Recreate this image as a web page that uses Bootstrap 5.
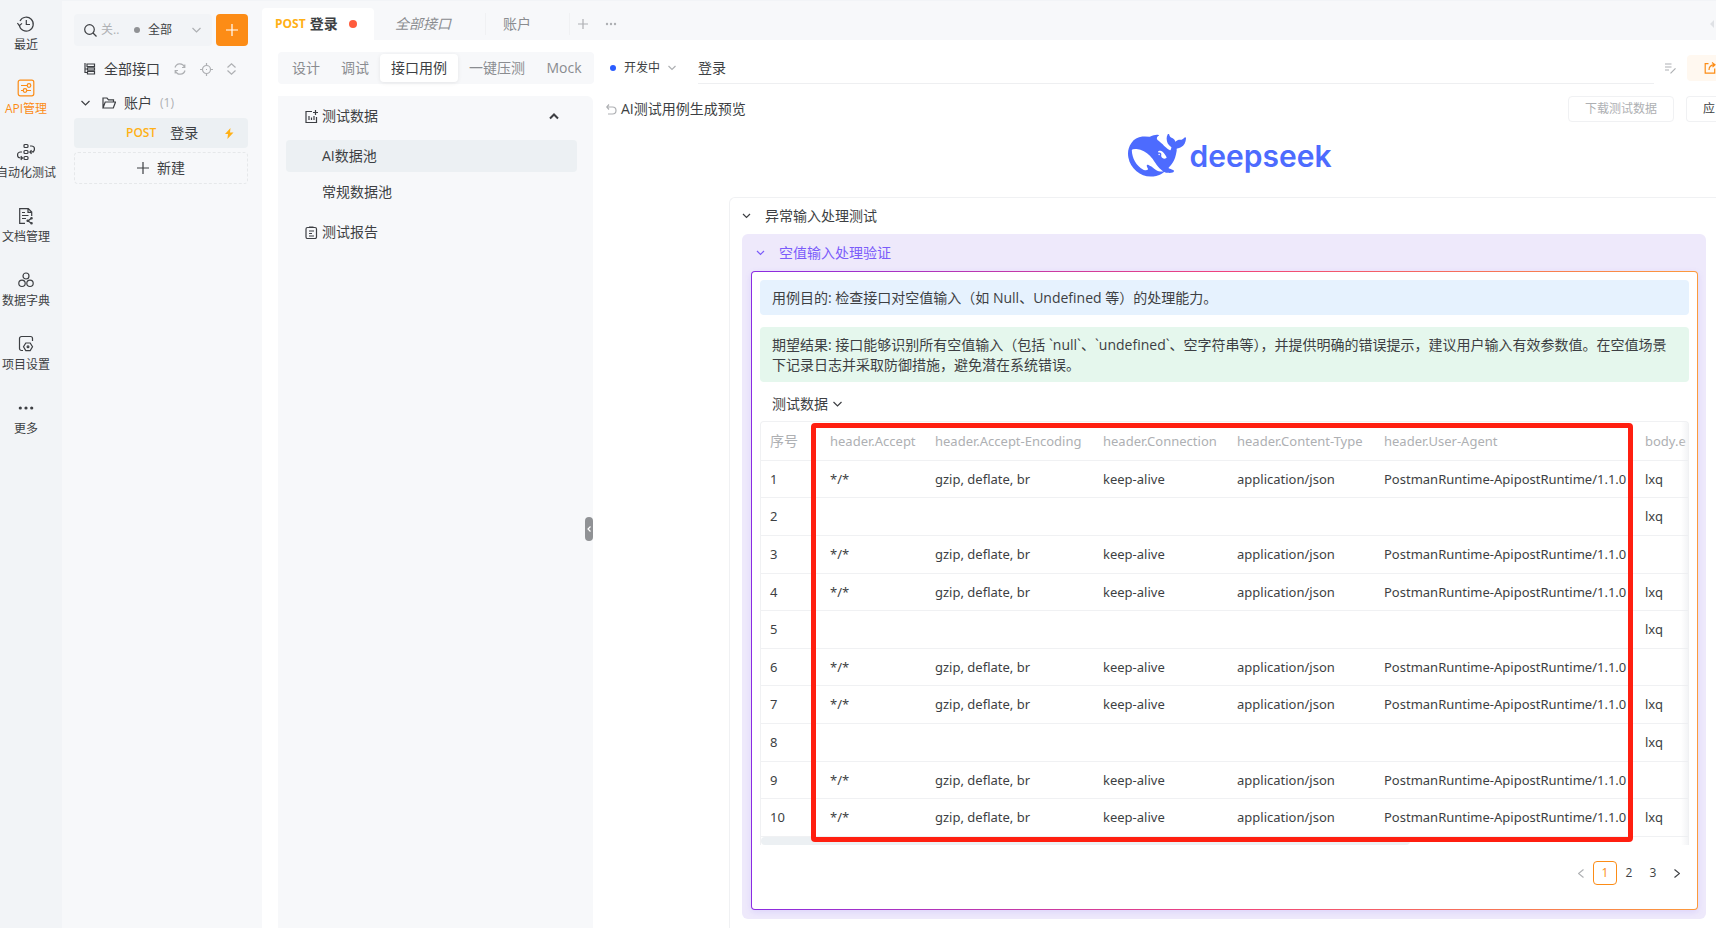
<!DOCTYPE html>
<html lang="zh-CN">
<head>
<meta charset="utf-8">
<meta name="viewport" content="width=device-width, initial-scale=1">
<title>登录 - 接口用例</title>
<link href="https://cdn.jsdelivr.net/npm/bootstrap@5.3.0/dist/css/bootstrap.min.css" rel="stylesheet">
<style>
  :root { --ink: #3d3f43; --muted: #8a8c90; --faint: #aeb0b3; --line: #f0f1f3; --soft: #f7f8fa; --hover: #ecf0f3; --orange: #fc8c16; }
  body { font: 14px/20px "Open Sans", "Noto Sans CJK SC", sans-serif; color: var(--ink); min-height: 100vh; overflow-x: hidden; border-top: 1px solid #f2f4f7; }
  button, input, select { font: inherit; color: inherit; border: 0; background: none; padding: 0; }
  a { color: inherit; text-decoration: none; }
  svg { display: block; flex: none; fill: none; stroke: currentColor; stroke-width: 1.2; }
  .fs12 { font-size: 12px; }
  .gap14 { gap: 14px; }
  .muted { color: var(--muted); }
  .faint { color: var(--faint); }

  .rail { width: 62px; background: #f2f4f7; padding: 14px 10px 0 0; flex: none; }
  .rail a { height: 64px; font-size: 12px; line-height: 16px; white-space: nowrap; gap: 4px; }
  .rail a.on { color: var(--orange); }

  .side { width: 200px; background: var(--soft); padding: 13px 14px 0 12px; flex: none; }
  .search-box { height: 32px; background: #f2f4f7; border-radius: 4px; padding: 0 10px; width: 138px; }
  .search-box input { width: 25px; }
  .search-box input::placeholder { color: var(--faint); opacity: 1; }
  .search-box select { appearance: none; width: 40px; }
  .add { width: 32px; height: 32px; background: var(--orange); color: #fff; border-radius: 4px; }
  .post { color: #ffb016; font-weight: 600; font-size: 12px; }
  .all-row { height: 32px; margin-top: 7px; padding-left: 10px; }
  .folder-row { height: 30px; margin-top: 3px; padding-left: 7px; }
  .tree-on { height: 30px; background: var(--hover); border-radius: 4px; padding: 0 14px 0 52px; }
  .new-btn { height: 32px; border: 1px dashed #e6e8ea; border-radius: 4px; }

  .tabs { height: 39px; background: var(--soft); padding-top: 7px; }
  .tabs .tab { height: 32px; }
  .tab.on { width: 112px; background: #fff; border-radius: 4px 4px 0 0; padding-left: 13px; font-weight: 600; }
  .tab.on .post { font-weight: 700; }
  .tab.mid { width: 112px; padding-left: 21px; font-style: italic; }
  .tab.end { width: 84px; padding-left: 17px; }
  .tab.mid::after, .tab.end::after { content: ""; width: 1px; height: 22px; background: var(--line); margin-left: auto; }
  .dot { border-radius: 50%; flex: none; display: inline-block; }

  .seg { width: 316px; height: 32px; background: var(--soft); border-radius: 4px; padding: 2px 0; }
  .seg button { height: 28px; color: var(--muted); border-radius: 4px; }
  .seg .on { width: 78px; background: #fff; color: var(--ink); box-shadow: 0 1px 4px rgba(0,0,0,.08); }
  .name-wrap { margin-left: 22px; }
  .name { border-bottom: 1px solid #eeeff1; height: 32px; width: 100%; outline: 0; padding-bottom: 2px; }
  .edit { padding: 0 10px; }
  .share { width: 29px; height: 26px; background: #fff8f0; color: var(--orange); border-radius: 4px 0 0 4px; padding-left: 17px; overflow: hidden; }

  .cases { width: 315px; background: var(--soft); border-radius: 0 6px 0 0; flex: none; position: relative; padding: 0 16px 0 8px; }
  .cases button, .cases a { height: 40px; }
  .cases .pool { height: 32px; padding-left: 36px; border-radius: 4px; }
  .cases .pool.on { background: var(--hover); }
  .cases .grip { position: absolute; right: 0; top: 421px; width: 8px; height: 24px; background: #909295; color: #fff; border-radius: 4px; }

  .btn-line { height: 26px; border: 1px solid var(--line); border-radius: 4px; font-size: 12px; }
  .btn-line.wide { width: 106px; margin-right: 12px; }
  .btn-line.cut { width: 30px; border-right: 0; border-radius: 4px 0 0 4px; padding-left: 16px; }

  .brand { color: #4d6bfe; height: 75px; padding: 0 0 8px 2px; margin-left: 148px; }
  .brand svg { fill: currentColor; stroke: none; }
  .brand span { font: 600 30px/40px Inter, sans-serif; }

  .case-box { border: 1px solid var(--line); border-right: 0; border-radius: 6px 0 0 0; margin-left: 136px; padding: 0 10px 9px 12px; }
  .group { background: #eee9fb; border-radius: 6px; padding: 0 8px 9px 9px; }
  .row-head { height: 36px; }
  .group .row-head { height: 37px; color: #7b5cfa; padding-left: 5px; }
  .frame { border: 1px solid transparent; border-radius: 4px; padding: 8px; height: 639px;
    background: linear-gradient(#fff,#fff) padding-box, linear-gradient(90deg,#8a2be2,#f0437c 50%,#fc9a3c) border-box; box-shadow: 0 2px 6px rgba(123,92,250,.15); }
  .note { border-radius: 4px; padding: 8px 12px 7px; }
  .aim { background: #e6f2fe; margin-bottom: 12px; }
  .expect { background: #e5f7ed; margin-bottom: 10px; }
  .data-toggle { height: 24px; margin: 0 0 5px 12px; }
  .data-wrap { position: relative; border: 1px solid var(--line); border-bottom: 0; border-radius: 4px 4px 0 0; overflow: hidden; height: 424px; }
  .data-wrap::after { content: ""; position: absolute; top: 0; right: 0; bottom: 0; width: 7px; background: linear-gradient(90deg, transparent, rgba(235,237,240,.6)); }
  .data-grid { table-layout: fixed; width: 100%; font-family: "Noto Sans", "Noto Sans CJK SC", sans-serif; font-size: 13px; }
  .data-grid th, .data-grid td { padding: 0 0 0 9px; border-bottom: 1px solid var(--line); white-space: nowrap; height: 38px; }
  .data-grid th { font-weight: 400; color: var(--faint); }
  .data-grid th:first-child { font-size: 14px; }
  .data-grid tbody tr:nth-child(5n+1) td, .data-grid tbody tr:nth-child(5n+4) td { height: 37px; }
  .hbar { height: 8px; width: 70%; background: var(--hover); border-radius: 4px; }
  .marker { position: absolute; left: 51px; right: 56px; top: 2px; height: 419px; border: 5px solid #ff1f10; border-radius: 4px; pointer-events: none; z-index: 2; }
  .marker-host { position: relative; }
  .pager button { width: 24px; height: 24px; font-size: 12px; border-radius: 4px; }
  .pager .on { border: 1px solid var(--orange); color: var(--orange); }
</style>
</head>
<body class="d-flex">

<nav class="rail">
  <a href="#" class="d-flex flex-column align-items-center"><svg width="18" height="18" viewBox="0 0 18 18" stroke-width="1.4"><path d="M3 6a7 7 0 1 1-.7 4"/><path d="M.4 8l2 2.6L5 8.400M9.300 5v4.500H13"/></svg>最近</a>
  <a href="#" class="on d-flex flex-column align-items-center"><svg width="18" height="18" viewBox="0 0 18 18" stroke-width="1.5"><rect x="1.200" y="1.200" width="15.600" height="15.600" rx="2"/><path d="M4 6.500h6M4 11.500h2M10 11.500h4"/><circle cx="12" cy="6.500" r="1.800"/><circle cx="8" cy="11.500" r="1.800"/></svg>API管理</a>
  <a href="#" class="d-flex flex-column align-items-center"><svg width="18" height="18" viewBox="0 0 18 18"><rect x="7" y="1.500" width="4" height="3" rx="1"/><rect x="7" y="7.500" width="4" height="3" rx="1"/><rect x="7" y="13.500" width="4" height="3" rx="1"/><path d="M13 3h1.500a3 3 0 0 1 0 6M17 9h-4l1.500-1.800M13 9l1.500 1.800M5 9H3.500a3 3 0 0 0 0 6H5M3.800 13.200L5.500 15l-1.700 1.800"/></svg>自动化测试</a>
  <a href="#" class="d-flex flex-column align-items-center"><svg width="18" height="18" viewBox="0 0 18 18" stroke-width="1.400"><path d="M8 16.300H2.700V1.700h8.600l3.400 3.400V9M11 2v3.400h3.500M5 5.500h3M5 8.500h6.500M5 11.500h4"/><path d="M14 11.500l-3 2.500 3 2"/><circle cx="14.500" cy="11.300" r=".7"/><circle cx="10.700" cy="13.800" r=".7"/><circle cx="14.500" cy="16.200" r=".7"/></svg>文档管理</a>
  <a href="#" class="d-flex flex-column align-items-center"><svg width="18" height="18" viewBox="0 0 18 18" stroke-width="1.500"><circle cx="9" cy="5" r="3"/><circle cx="5" cy="12.300" r="3.200"/><circle cx="13" cy="12.300" r="3.200"/></svg>数据字典</a>
  <a href="#" class="d-flex flex-column align-items-center"><svg width="18" height="18" viewBox="0 0 18 18" stroke-width="1.400"><path d="M6 15.500H4.500a2 2 0 0 1-2-2v-10a2 2 0 0 1 2-2h9a2 2 0 0 1 2 2V6"/><path d="M8.800 8h4.400l2.300 3.800-2.300 3.800H8.800l-2.300-3.800z"/><circle cx="11" cy="11.800" r=".9"/></svg>项目设置</a>
  <a href="#" class="d-flex flex-column align-items-center"><svg width="18" height="18" viewBox="0 0 18 18" style="fill:currentColor;stroke:none"><circle cx="3.300" cy="9" r="1.600"/><circle cx="9" cy="9" r="1.600"/><circle cx="14.700" cy="9" r="1.600"/></svg>更多</a>
</nav>

<aside class="side">
  <div class="d-flex gap-1">
    <div class="search-box d-flex align-items-center">
      <svg width="13" height="13" viewBox="0 0 13 13"><circle cx="5.500" cy="5.500" r="4.800"/><path d="M9 9l3.500 3.500"/></svg>
      <input class="ms-1 fs12" type="text" placeholder="关.." aria-label="关键词">
      <i class="dot ms-2" style="width:6px;height:6px;background:#909295"></i>
      <select class="ms-2 fs12" aria-label="类型"><option>全部</option></select>
      <svg class="faint ms-1" width="9" height="6" viewBox="0 0 9 6"><path d="M.5 1l4 4 4-4"/></svg>
    </div>
    <button class="add d-flex align-items-center justify-content-center" aria-label="添加"><svg width="12" height="12" viewBox="0 0 12 12" stroke-width="1.500"><path d="M6 0v12M0 6h12"/></svg></button>
  </div>
  <div class="all-row d-flex align-items-center gap14">
    <span class="d-flex align-items-center gap-2"><svg width="12" height="12" viewBox="0 0 12 12"><path d="M3 1h7.500v2.500H3zM3.500 4.800h7v2.400h-7zM3.500 8.500h7V11h-7zM1 0v9.500h2.500M1 6h2.500"/></svg>
    <a href="#">全部接口</a></span>
    <svg class="faint" width="12" height="12" viewBox="0 0 12 12"><path d="M1 4.500a5 5 0 0 1 9.500-.5M10.800 1.500V4.500H8M11 7.500a5 5 0 0 1-9.500.5M1.200 10.500V7.500H4"/></svg>
    <svg class="faint" width="13" height="13" viewBox="0 0 13 13"><circle cx="6.500" cy="6.500" r="4"/><path d="M6.500 0v3M6.500 10v3M0 6.500h3M10 6.500h3M6 6.500h1"/></svg>
    <svg class="faint" width="9" height="12" viewBox="0 0 9 12"><path d="M.5 4.500l4-3.700 4 3.700M.5 7.500l4 3.700 4-3.700"/></svg>
  </div>
  <div class="folder-row d-flex align-items-center">
    <svg width="9" height="6" viewBox="0 0 9 6"><path d="M.5 1l4 4 4-4"/></svg>
    <svg class="ms-2 me-2 ps-1" width="18" height="12" viewBox="0 0 14 12"><path d="M1 11V1h4l1.500 1.800h5V5M1 11L3.200 5H13.500l-2.200 6z"/></svg>
    <a href="#">账户</a><span class="faint ms-2 fs12">(1)</span>
  </div>
  <a href="#" class="tree-on d-flex align-items-center"><span class="d-flex gap14"><span class="post">POST</span><span>登录</span></span><svg class="ms-auto" width="9" height="11" viewBox="0 0 9 11" style="fill:#ffb016;stroke:none"><path d="M5.500 0L0 6h3l-.6 5L8.500 4.500H5z"/></svg></a>
  <button class="new-btn w-100 mt-1 d-flex align-items-center justify-content-center gap-2"><svg width="12" height="12" viewBox="0 0 12 12" stroke-width="1.500"><path d="M6 0v12M0 6h12"/></svg>新建</button>
</aside>

<main class="flex-fill d-flex flex-column" style="min-width:0">
  <div class="tabs d-flex">
    <a href="#" class="tab on d-flex align-items-center"><span class="post">POST</span><span class="ms-1">登录</span><i class="dot ms-auto" style="width:8px;height:8px;background:#ff5b3c;margin-right:17px"></i></a>
    <a href="#" class="tab mid muted d-flex align-items-center">全部接口</a>
    <a href="#" class="tab end muted d-flex align-items-center">账户</a>
    <button class="faint ms-2" aria-label="新标签"><svg width="10" height="10" viewBox="0 0 10 10" stroke-width="1.500"><path d="M5 0v10M0 5h10"/></svg></button>
    <button class="faint ms-3 px-0" aria-label="更多标签"><svg width="14" height="4" viewBox="0 0 14 4" style="fill:currentColor;stroke:none"><circle cx="3" cy="2" r="1.200"/><circle cx="7" cy="2" r="1.200"/><circle cx="11" cy="2" r="1.200"/></svg></button>
    <button class="ms-auto" aria-label="向左" style="color:#dfe1e5"><svg width="6" height="8" viewBox="0 0 6 8" style="fill:currentColor;stroke:none"><path d="M4 0v8L0 4z"/></svg></button>
  </div>

  <div class="d-flex align-items-center ps-3" style="height:56px">
    <div class="seg d-flex">
      <button class="ms-1" style="width:48px">设计</button><button style="width:50px">调试</button><button class="on">接口用例</button><button style="width:78px">一键压测</button><button style="width:56px">Mock</button>
    </div>
    <i class="dot ms-3" style="width:6px;height:6px;background:#2a5cff"></i>
    <button class="d-flex align-items-center ms-2 fs12">开发中<svg class="faint ms-2" width="8" height="6" viewBox="0 0 8 6"><path d="M.5 1L4 4.500 7.500 1"/></svg></button>
    <div class="name-wrap flex-fill"><input class="name" type="text" value="登录" aria-label="名称"></div>
    <button class="edit faint" aria-label="编辑说明"><svg width="13" height="11" viewBox="0 0 13 11" stroke-width="1.500"><path d="M1 1h6.500M1 4h6.500M1 7h4M6.500 10.300l5-5"/></svg></button>
    <button class="share d-flex align-items-center" aria-label="分享"><svg width="12" height="12" viewBox="0 0 12 12" stroke-width="1.400"><path d="M4.500 1.700H1.200v9.500h9.500V6.500M5 8c0-4 2-5 5.500-5.300M8 .5l3 2.200-2.500 2.500"/></svg></button>
  </div>

  <div class="d-flex flex-fill ps-3">
    <div class="cases">
      <button class="w-100 d-flex align-items-center mb-1" style="padding-left:19px"><svg width="13" height="13" viewBox="0 0 13 13"><path d="M7 1.500H1v11h10.500V7M4 10V6M6.500 10V7.500M9 10V6M10.500 0v5M8 2.500h5"/></svg><span class="ms-1">测试数据</span><svg class="ms-auto" width="10" height="7" viewBox="0 0 10 7" style="stroke-width:2;margin-right:18px"><path d="M1 5.500l4-4 4 4"/></svg></button>
      <a href="#" class="pool on d-flex align-items-center mb-1">AI数据池</a>
      <a href="#" class="pool d-flex align-items-center mb-1">常规数据池</a>
      <a href="#" class="d-flex align-items-center" style="padding-left:19px"><svg width="13" height="13" viewBox="0 0 13 13"><rect x="1" y="1.500" width="10.500" height="11" rx="1.500"/><path d="M4 1.200h4.500M4 5h5M4 7.500h3M4 10h5"/></svg><span class="ms-1">测试报告</span></a>
      <button class="grip d-flex align-items-center justify-content-center" aria-label="收起"><svg width="4" height="6" viewBox="0 0 4 6"><path d="M3.500.5L1 3l2.500 2.500"/></svg></button>
    </div>

    <section class="flex-fill" style="min-width:0">
      <div class="d-flex align-items-center">
        <button class="faint" style="margin-left:13px" aria-label="返回"><svg width="11" height="11" viewBox="0 0 11 11"><path d="M3 .5L.8 3 3 5.500M1 3h5.500a3.500 3.500 0 0 1 0 7H2"/></svg></button>
        <span class="ms-1 me-auto">AI测试用例生成预览</span>
        <button class="btn-line wide faint">下载测试数据</button>
        <button class="btn-line cut text-start">应</button>
      </div>
      <div class="brand d-flex align-items-center justify-content-center gap-1">
        <svg width="58" height="43" viewBox="0 3.300 24 17.400"><path d="M23.748 4.482c-.254-.124-.364.113-.512.234-.051.039-.094.09-.137.136-.372.397-.806.657-1.373.626-.829-.046-1.537.214-2.163.848-.133-.782-.575-1.248-1.247-1.548-.352-.156-.708-.311-.955-.65-.172-.241-.219-.51-.305-.774-.055-.16-.11-.323-.293-.35-.2-.031-.278.136-.356.276-.313.572-.434 1.202-.422 1.84.027 1.436.633 2.58 1.838 3.393.137.093.172.187.129.323-.082.28-.18.552-.266.833-.055.179-.137.217-.329.14a5.526 5.526 0 01-1.736-1.18c-.857-.828-1.631-1.742-2.597-2.458a11.365 11.365 0 00-.689-.471c-.985-.957.13-1.743.388-1.836.27-.098.093-.432-.779-.428-.872.004-1.67.295-2.687.684a3.055 3.055 0 01-.465.137 9.597 9.597 0 00-2.883-.102c-1.885.21-3.39 1.102-4.497 2.623C.082 8.606-.231 10.684.152 12.85c.403 2.284 1.569 4.175 3.36 5.653 1.858 1.533 3.997 2.284 6.438 2.14 1.482-.085 3.133-.284 4.994-1.86.47.234.962.327 1.78.397.63.059 1.236-.03 1.705-.128.735-.156.684-.837.419-.961-2.155-1.004-1.682-.595-2.113-.926 1.096-1.296 2.746-2.642 3.392-7.003.05-.347.007-.565 0-.845-.004-.17.035-.237.23-.256a4.173 4.173 0 001.545-.475c1.396-.763 1.96-2.015 2.093-3.517.02-.23-.004-.467-.247-.588zM11.581 18c-2.089-1.642-3.102-2.183-3.52-2.16-.392.024-.321.471-.235.763.09.288.207.486.371.739.114.167.192.416-.113.603-.673.416-1.842-.14-1.897-.167-1.361-.802-2.5-1.86-3.301-3.307-.774-1.393-1.224-2.887-1.298-4.482-.02-.386.093-.522.477-.592a4.696 4.696 0 011.529-.039c2.132.312 3.946 1.265 5.468 2.774.868.86 1.525 1.887 2.202 2.891.72 1.066 1.494 2.082 2.48 2.914.348.292.625.514.891.677-.802.09-2.14.11-3.054-.614zm1-6.44a.306.306 0 01.415-.287.302.302 0 01.2.288.306.306 0 01-.31.307.303.303 0 01-.304-.308zm3.11 1.596c-.2.081-.399.151-.59.16a1.245 1.245 0 01-.798-.254c-.274-.23-.47-.358-.552-.758a1.73 1.73 0 01.016-.588c.07-.327-.008-.537-.239-.727-.187-.156-.426-.199-.688-.199a.559.559 0 01-.254-.078c-.11-.054-.2-.19-.114-.358.028-.054.16-.186.192-.21.356-.202.767-.136 1.146.016.352.144.618.408 1.001.782.391.451.462.576.685.914.176.265.336.537.445.848.067.195-.019.354-.25.452z"/></svg>
        <span>deepseek</span>
      </div>

      <div class="case-box">
        <button class="row-head d-flex align-items-center w-100 gap14"><svg width="9" height="6" viewBox="0 0 9 6"><path d="M1 1l3.500 3.500L8 1"/></svg><span>异常输入处理测试</span></button>
        <div class="group">
          <button class="row-head d-flex align-items-center w-100 gap14"><svg width="9" height="6" viewBox="0 0 9 6"><path d="M1 1l3.500 3.500L8 1"/></svg><span>空值输入处理验证</span></button>
          <div class="frame">
            <div class="note aim">用例目的: 检查接口对空值输入（如 Null、Undefined 等）的处理能力。</div>
            <div class="note expect">期望结果: 接口能够识别所有空值输入（包括 `null`、`undefined`、空字符串等），并提供明确的错误提示，建议用户输入有效参数值。在空值场景下记录日志并采取防御措施，避免潜在系统错误。</div>
            <button class="data-toggle d-flex align-items-center">测试数据<svg class="ms-1" width="11" height="7" viewBox="0 0 11 7"><path d="M1.500 1l4 4 4-4"/></svg></button>
            <div class="marker-host">
              <div class="data-wrap">
                <table class="data-grid">
                  <colgroup><col style="width:60px"><col style="width:105px"><col style="width:168px"><col style="width:134px"><col style="width:147px"><col style="width:261px"><col></colgroup>
                  <thead><tr><th>序号</th><th>header.Accept</th><th>header.Accept-Encoding</th><th>header.Connection</th><th>header.Content-Type</th><th>header.User-Agent</th><th>body.e</th></tr></thead>
                  <tbody>
                    <tr><td>1</td><td>*/*</td><td>gzip, deflate, br</td><td>keep-alive</td><td>application/json</td><td>PostmanRuntime-ApipostRuntime/1.1.0</td><td>lxq</td></tr>
                    <tr><td>2</td><td></td><td></td><td></td><td></td><td></td><td>lxq</td></tr>
                    <tr><td>3</td><td>*/*</td><td>gzip, deflate, br</td><td>keep-alive</td><td>application/json</td><td>PostmanRuntime-ApipostRuntime/1.1.0</td><td></td></tr>
                    <tr><td>4</td><td>*/*</td><td>gzip, deflate, br</td><td>keep-alive</td><td>application/json</td><td>PostmanRuntime-ApipostRuntime/1.1.0</td><td>lxq</td></tr>
                    <tr><td>5</td><td></td><td></td><td></td><td></td><td></td><td>lxq</td></tr>
                    <tr><td>6</td><td>*/*</td><td>gzip, deflate, br</td><td>keep-alive</td><td>application/json</td><td>PostmanRuntime-ApipostRuntime/1.1.0</td><td></td></tr>
                    <tr><td>7</td><td>*/*</td><td>gzip, deflate, br</td><td>keep-alive</td><td>application/json</td><td>PostmanRuntime-ApipostRuntime/1.1.0</td><td>lxq</td></tr>
                    <tr><td>8</td><td></td><td></td><td></td><td></td><td></td><td>lxq</td></tr>
                    <tr><td>9</td><td>*/*</td><td>gzip, deflate, br</td><td>keep-alive</td><td>application/json</td><td>PostmanRuntime-ApipostRuntime/1.1.0</td><td></td></tr>
                    <tr><td>10</td><td>*/*</td><td>gzip, deflate, br</td><td>keep-alive</td><td>application/json</td><td>PostmanRuntime-ApipostRuntime/1.1.0</td><td>lxq</td></tr>
                  </tbody>
                </table>
                <div class="hbar"></div>
              </div>
              <div class="marker"></div>
            </div>
            <div class="pager d-flex justify-content-end mt-3">
              <button class="faint d-flex align-items-center justify-content-center" aria-label="上一页"><svg width="6" height="9" viewBox="0 0 6 9"><path d="M5.500.5l-5 4 5 4"/></svg></button><button class="on">1</button><button>2</button><button>3</button><button class="d-flex align-items-center justify-content-center" aria-label="下一页"><svg width="6" height="9" viewBox="0 0 6 9"><path d="M.5.5l5 4-5 4"/></svg></button>
            </div>
          </div>
        </div>
      </div>
    </section>
  </div>
</main>

<script src="https://cdn.jsdelivr.net/npm/bootstrap@5.3.0/dist/js/bootstrap.bundle.min.js"></script>
</body>
</html>
